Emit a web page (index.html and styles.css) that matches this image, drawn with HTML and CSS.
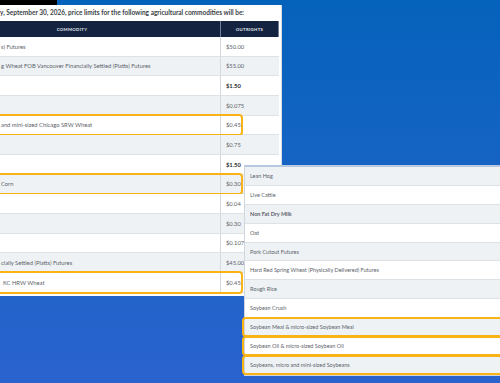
FILE: index.html
```html
<!DOCTYPE html>
<html>
<head>
<meta charset="utf-8">
<link rel="stylesheet" href="styles.css">
</head>
<body>
<div class="page">
  <div class="topbar"></div>
  <section class="limits">
    <p class="intro">y, September 30, 2026, price limits for the following agricultural commodities will be:</p>
    <div class="table">
      <div class="row head"><div class="c1">COMMODITY</div><div class="c2">OUTRIGHTS</div></div>
      <div class="row"><div class="c1">s) Futures</div><div class="c2">$50.00</div></div>
      <div class="row alt"><div class="c1">g Wheat FOB Vancouver Financially Settled (Platts) Futures</div><div class="c2">$55.00</div></div>
      <div class="row"><div class="c1"></div><div class="c2 strong">$1.50</div></div>
      <div class="row alt"><div class="c1"></div><div class="c2">$0.075</div></div>
      <div class="row mark"><div class="c1">and mini-sized Chicago SRW Wheat</div><div class="c2">$0.45</div></div>
      <div class="row alt"><div class="c1"></div><div class="c2">$0.75</div></div>
      <div class="row"><div class="c1"></div><div class="c2 strong">$1.50</div></div>
      <div class="row alt mark"><div class="c1">Corn</div><div class="c2">$0.30</div></div>
      <div class="row"><div class="c1"></div><div class="c2">$0.04</div></div>
      <div class="row alt"><div class="c1"></div><div class="c2">$0.30</div></div>
      <div class="row"><div class="c1"></div><div class="c2">$0.1075</div></div>
      <div class="row alt"><div class="c1">cially Settled (Platts) Futures</div><div class="c2">$45.00</div></div>
      <div class="row mark"><div class="c1 shift">KC HRW Wheat</div><div class="c2">$0.45</div></div>
    </div>
  </section>
  <section class="list">
    <div class="item alt">Lean Hog</div>
    <div class="item">Live Cattle</div>
    <div class="item alt strong">Non Fat Dry Milk</div>
    <div class="item">Oat</div>
    <div class="item alt">Pork Cutout Futures</div>
    <div class="item">Hard Red Spring Wheat (Physically Delivered) Futures</div>
    <div class="item alt">Rough Rice</div>
    <div class="item">Soybean Crush</div>
    <div class="item alt mark">Soybean Meal &amp; micro-sized Soybean Meal</div>
    <div class="item mark">Soybean Oil &amp; micro-sized Soybean Oil</div>
    <div class="item alt mark">Soybeans, micro and mini-sized Soybeans</div>
  </section>
</div>
</body>
</html>
```

FILE: styles.css
```css
html, body {
  margin: 0;
  padding: 0;
}
body {
  width: 500px;
  height: 383px;
  overflow: hidden;
  background: linear-gradient(180deg, #0562bb 0%, #1864c6 50%, #2b63ce 100%);
  font-family: Lato, "Noto Sans", sans-serif;
}
.page {
  position: relative;
  width: 500px;
  height: 383px;
}
.topbar {
  width: 57px;
  height: 5px;
  background: #000;
}
.limits {
  width: 279px;
  padding-right: 2px;
  border-right: 1px solid #d7dde4;
  background: #fff;
  padding-bottom: 3px;
}
.intro {
  margin: 0;
  height: 16px;
  line-height: 15px;
  font-size: 6.5px;
  font-weight: 700;
  color: #3b3f46;
  white-space: nowrap;
  overflow: hidden;
}
.table {
  display: flex;
  flex-direction: column;
}
.row {
  position: relative;
  display: grid;
  grid-template-columns: 220px 59px;
  height: 19.67px;
  box-sizing: border-box;
  border-bottom: 1px solid #dde2e7;
  background: #fff;
  font-size: 5.8px;
  color: #5d626a;
}
.row.alt {
  background: #eef2f5;
}
.row > div {
  display: flex;
  align-items: center;
  white-space: nowrap;
  overflow: hidden;
}
.c1 {
  padding-left: 1px;
}
.c1.shift {
  padding-left: 3px;
}
.c2 {
  padding-left: 5px;
  border-left: 1px solid #d3d9df;
}
.strong {
  font-weight: 700;
  color: #262a31;
}
.row.head {
  height: 16px;
  background: #14233f;
  border-bottom: none;
  color: #e6ebf2;
  font-size: 4.3px;
  font-weight: 700;
  letter-spacing: 0.3px;
}
.row.head > div {
  justify-content: center;
  padding-left: 0;
}
.row.head .c1 {
  padding-right: 76px;
}
.row.head .c2 {
  border-left: 1px solid #6f7f96;
  border-right: 1px solid #6f7f96;
}
.row.mark::after {
  content: "";
  position: absolute;
  left: -10px;
  right: 36px;
  top: -2px;
  bottom: -2px;
  border: 2px solid #f9b316;
  border-radius: 4px;
  pointer-events: none;
}
.list {
  position: absolute;
  left: 244px;
  top: 165px;
  width: 280px;
  background: #fff;
  border: 1px solid #cfd6de;
  border-top: 2px solid #b9c8dc;
  display: flex;
  flex-direction: column;
}
.item {
  position: relative;
  height: 18.9px;
  box-sizing: border-box;
  padding-left: 5px;
  display: flex;
  align-items: center;
  border-bottom: 1px solid #dde2e7;
  font-size: 5.5px;
  color: #5d626a;
  white-space: nowrap;
}
.item.alt {
  background: #eef2f5;
}
.item.mark::after {
  content: "";
  position: absolute;
  left: -3px;
  right: -10px;
  top: -1px;
  bottom: -1px;
  border: 2px solid #f9b316;
  border-radius: 4px;
}
```
